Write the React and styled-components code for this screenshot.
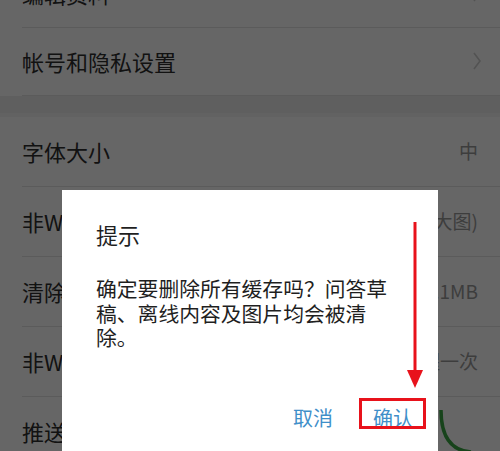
import React from "react";
import styled, { createGlobalStyle } from "styled-components";

const GlobalStyle = createGlobalStyle`
  body {
    margin: 0;
    background: #fff;
    font-family: "Noto Sans CJK SC", "Noto Sans", sans-serif;
    overflow: hidden;
  }
`;

const sectionOne = [
  { label: "编辑资料", chevron: true },
  { label: "帐号和隐私设置", chevron: true }
];

const sectionTwo = [
  { label: "字体大小", value: "中" },
  { label: "非WiFi网络下图片质量", value: "智能 (大图)" },
  { label: "清除缓存", value: "23.1MB" },
  { label: "非WiFi下视频播放", value: "仅提醒一次" },
  { label: "推送通知", toggle: true }
];

// message lines as they wrap in the dialog
const messageLines = ["确定要删除所有缓存吗？问答草", "稿、离线内容及图片均会被清", "除。"];

const Chevron = () => (
  <svg width="10" height="20" viewBox="0 0 10 20">
    <path d="M2 2 L8 10 L2 18" fill="none" stroke="#cfcfcf" strokeWidth="1.6" />
  </svg>
);

const ToggleArc = () => (
  <svg width="40" height="46" viewBox="0 0 40 46">
    <path d="M3 2 Q 3 42 33 44" fill="none" stroke="#3aa845" strokeWidth="3.5" />
  </svg>
);

const SettingsRow = ({ item, h }) => (
  <Row $h={h} $chevron={item.chevron}>
    <RowLabel>{item.label}</RowLabel>
    {item.value && <RowValue>{item.value}</RowValue>}
    {item.chevron && <Chevron />}
    {item.toggle && <ToggleArc />}
  </Row>
);

export default function App() {
  return (
    <Screen>
      <GlobalStyle />
      <SettingsList>
        {sectionOne.map(item => (
          <SettingsRow key={item.label} item={item} h={68} />
        ))}
        <SectionGap />
        {sectionTwo.map(item => (
          <SettingsRow key={item.label} item={item} h={70} />
        ))}
      </SettingsList>

      <Dim />

      <Dialog>
        <DialogTitle>提示</DialogTitle>
        <DialogBody>
          {messageLines.map(line => (
            <BodyLine key={line}>{line}</BodyLine>
          ))}
        </DialogBody>
        <DialogFooter>
          <DialogButton>取消</DialogButton>
          <DialogButton>确认</DialogButton>
        </DialogFooter>
      </Dialog>

      <Highlight />
      <Arrow width="20" height="170" viewBox="0 0 20 170">
        <line x1="10" y1="0" x2="10" y2="152" stroke="#e8121b" strokeWidth="3" />
        <polygon points="2,148 18,148 10,166" fill="#e8121b" />
      </Arrow>
    </Screen>
  );
}

const Screen = styled.div`
  position: relative;
  width: 500px;
  height: 451px;
  overflow: hidden;
  background: #fff;
`;

const SettingsList = styled.div`
  margin-top: -40px;
  display: flex;
  flex-direction: column;
`;

const Row = styled.div`
  box-sizing: border-box;
  height: ${p => p.$h}px;
  margin-left: 22px;
  padding-right: ${p => (p.$chevron ? 18 : 22)}px;
  padding-bottom: 2px;
  display: flex;
  align-items: center;
  justify-content: space-between;
  border-bottom: 1px solid #e4e4e4;
`;

const RowLabel = styled.span`
  font-size: 22px;
  color: #2e2e2e;
  white-space: nowrap;
`;

const RowValue = styled.span`
  font-size: 19px;
  color: #9a9a9a;
  white-space: nowrap;
`;

const SectionGap = styled.div`
  box-sizing: border-box;
  height: 21px;
  background: #ededed;
  border-bottom: 4px solid #f6f6f6;
`;

const Dim = styled.div`
  position: absolute;
  inset: 0;
  background: rgba(0, 0, 0, 0.6);
`;

const Dialog = styled.div`
  position: absolute;
  left: 62px;
  top: 190px;
  width: 376px;
  height: 290px;
  background: #fff;
  padding-top: 31px;
  box-sizing: border-box;
`;

const DialogTitle = styled.div`
  padding-left: 34px;
  font-size: 22px;
  line-height: 27px;
  color: #1f1f1f;
`;

const DialogBody = styled.div`
  margin-top: 28px;
  padding-left: 34px;
  font-size: 20.8px;
  line-height: 24.5px;
  color: #1f1f1f;
`;

const BodyLine = styled.div`
  white-space: nowrap;
`;

const DialogFooter = styled.div`
  margin-top: 53px;
  padding-right: 25px;
  display: flex;
  justify-content: flex-end;
  gap: 40px;
`;

const DialogButton = styled.span`
  font-size: 20px;
  line-height: 30px;
  color: #3f8fc9;
`;

const Highlight = styled.div`
  position: absolute;
  left: 359px;
  top: 398px;
  width: 67px;
  height: 31px;
  box-sizing: border-box;
  border: 3px solid #e8121b;
`;

const Arrow = styled.svg`
  position: absolute;
  left: 405px;
  top: 222px;
`;
